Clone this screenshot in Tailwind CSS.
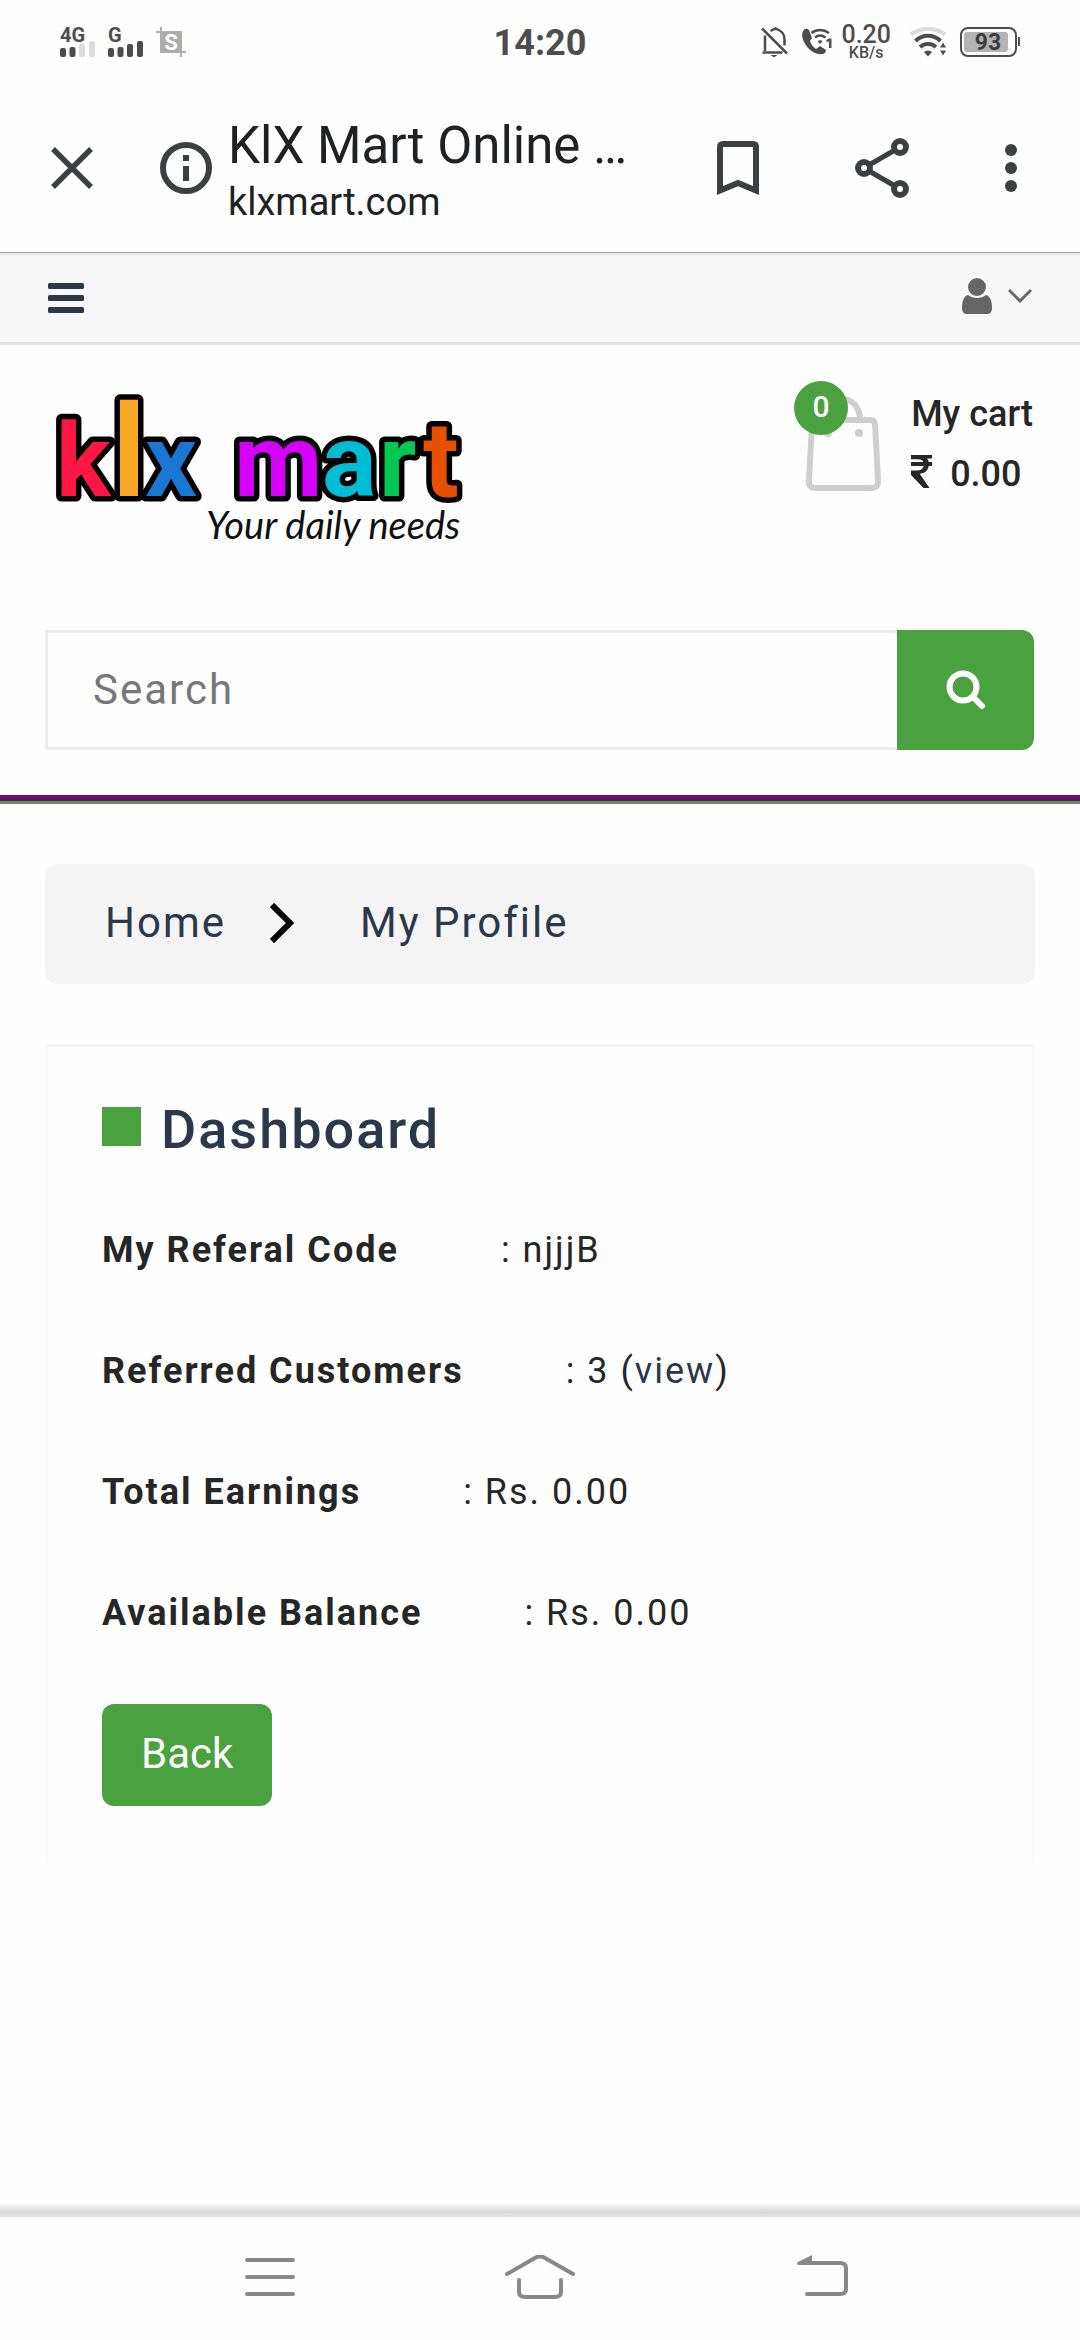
<!DOCTYPE html>
<html lang="en">
<head>
<meta charset="utf-8">
<meta name="viewport" content="width=device-width, initial-scale=1">
<title>KlX Mart Online</title>
<script src="https://cdn.jsdelivr.net/npm/@tailwindcss/browser@4"></script>
</head>
<body class="flex min-h-screen flex-col bg-[#fefefe] font-['Roboto',sans-serif] text-[#262626]">

<!-- Device status bar -->
<div class="grid h-[84px] grid-cols-3 items-center px-[60px] text-[#4d4d4d]">
  <div class="flex items-center gap-3">
    <svg class="h-[30px] w-9 overflow-visible" viewBox="0 0 36 30" fill="#4d4d4d">
      <text x="0" y="15" font-size="20" font-weight="700" font-family="Roboto, sans-serif">4G</text>
      <rect x="0" y="21" width="6" height="9" rx="2"/><rect x="9.500" y="20" width="6" height="10" rx="2"/>
      <rect x="19" y="17" width="6" height="13" rx="2" fill="#dcdcdc"/><rect x="29" y="14" width="6" height="16" rx="2" fill="#dcdcdc"/>
    </svg>
    <svg class="h-[30px] w-9 overflow-visible" viewBox="0 0 36 30" fill="#4d4d4d">
      <text x="0" y="15" font-size="20" font-weight="700" font-family="Roboto, sans-serif">G</text>
      <rect x="0" y="21" width="6" height="9" rx="2"/><rect x="9.500" y="20" width="6" height="10" rx="2"/>
      <rect x="19" y="17" width="6" height="13" rx="2"/><rect x="29" y="14" width="6" height="16" rx="2"/>
    </svg>
    <svg class="h-[30px] w-[30px]" viewBox="0 0 30 30">
      <rect x="4" y="4" width="22" height="22" fill="#adadad"/>
      <path d="M0 5h6M5 0v6M24 25h6M25 24v6" fill="none" stroke="#adadad" stroke-width="2"/>
      <text x="15" y="23" font-size="22" font-weight="700" text-anchor="middle" fill="#fff" font-family="Roboto, sans-serif">S</text>
    </svg>
  </div>
  <div class="pt-px text-center text-4xl/[40px] font-bold">14:20</div>
  <div class="flex items-center justify-end">
    <svg class="mr-3 h-[30px] w-7" viewBox="0 0 28 30" fill="none" stroke="#4d4d4d" stroke-width="2.500">
      <path d="M1 1.500l25 25"/>
      <path d="M4 8.500V24M1.500 25.500h20M9.500 4l5-2.500 4 2c4 2 5 6 5 9v6"/>
      <path d="M9.500 28h7l-3.500 2.500z" fill="#4d4d4d" stroke="none"/>
    </svg>
    <svg class="mr-2 h-[30px] w-8" viewBox="0 0 32 30" fill="#4d4d4d">
      <path d="M4 2C1 4 0 9 3 15c4 8 11 13 19 12 2-1 3-2 3-4l-6-4-4 3c-3-2-5-5-6-8l2-3-3-8C7 1.500 5.500 1.500 4 2z"/>
      <path d="M10.500 6c5-4 12-4 17.500 0M14 10.500c3-2.500 7-2.500 10.500 0" fill="none" stroke="#4d4d4d" stroke-width="2.500"/>
      <path d="M16.500 14c2-1 3.500-1 5 0L19 17z"/>
      <path d="M25.500 13l2.500-1.500h2.500V21H28v-6.500l-2.500.5z"/>
    </svg>
    <div class="mr-[19px] flex flex-col items-center font-medium">
      <span class="text-[25px]/[20px]">0.20</span>
      <span class="text-base/[15px]">KB/s</span>
    </div>
    <svg class="mr-3 h-[30px] w-[38px]" viewBox="0 0 38 30" fill="none" stroke="#4d4d4d" stroke-width="4">
      <path d="M1 7.500c9-7.500 25-7.500 34 0" stroke="#dcdcdc"/>
      <path d="M5.500 14c7-7 18-7 25 0M10 20c5-4 11-4 16 0"/>
      <path d="M14 25c2.500-2 5.500-2 8 0l-4 4.500z" fill="#4d4d4d" stroke="none"/>
      <path d="M30 20.500l3-5 3 5zM30 23.500l3 5 3-5z" fill="#4d4d4d" stroke="none"/>
    </svg>
    <svg class="h-[30px] w-[60px]" viewBox="0 0 60 30">
      <rect x="1" y="1" width="55" height="28" rx="7" fill="none" stroke="#4d4d4d" stroke-width="2"/>
      <rect x="4" y="5" width="44" height="20" rx="3" fill="#b3b3b3"/>
      <rect x="58" y="10" width="2" height="9" fill="#4d4d4d"/>
      <text x="28" y="23" font-size="23" font-weight="700" text-anchor="middle" fill="#3d3d3d" font-family="Roboto, sans-serif">93</text>
    </svg>
  </div>
</div>

<!-- Browser toolbar -->
<div class="flex h-[168px] items-center pr-[57px] pl-[51px]">
  <button type="button" aria-label="Close tab"><svg class="block h-[42px] w-[42px]" viewBox="0 0 42 42" fill="none" stroke="#3c4043" stroke-width="5.500"><path d="M2 2l38 38M40 2L2 40"/></svg></button>
  <button type="button" aria-label="Site information" class="ml-[67px]"><svg class="block h-[52px] w-[52px]" viewBox="0 0 52 52"><circle cx="26" cy="26" r="23" fill="none" stroke="#3c4043" stroke-width="6"/><path d="M23 13h6v6h-6zM23 24h6v15h-6z" fill="#3c4043"/></svg></button>
  <div class="ml-4 min-w-0 flex-1 pt-1 text-[#202124]">
    <div class="truncate text-[51px]/[64px]">KlX Mart Online …</div>
    <div class="truncate text-[38px]/[48px]">klxmart.com</div>
  </div>
  <button type="button" aria-label="Bookmark"><svg class="block h-[54px] w-[42px]" viewBox="0 0 42 54"><path d="M3 49.500V6q0-3 3-3h30q3 0 3 3v43.500l-18-7.500z" fill="none" stroke="#3c4043" stroke-width="6"/></svg></button>
  <button type="button" aria-label="Share" class="ml-24"><svg class="block h-[60px] w-[54px]" viewBox="0 0 54 60" fill="none" stroke="#3c4043" stroke-width="6"><circle cx="45" cy="9" r="6"/><circle cx="9" cy="30" r="6"/><circle cx="45" cy="51" r="6"/><path d="M14 27l26-15M14 33l26 15" stroke-width="5"/></svg></button>
  <button type="button" aria-label="More options" class="ml-[90px]"><svg class="block h-12 w-6" viewBox="0 0 24 48" fill="#3c4043"><circle cx="12" cy="6" r="6"/><circle cx="12" cy="24" r="6"/><circle cx="12" cy="42" r="6"/></svg></button>
</div>

<!-- Shop top bar -->
<nav class="flex h-[93px] items-center justify-between border-t border-b-[3px] border-t-[#a6a6a6] border-b-[#e2e2e2] bg-[#f7f7f7] bg-linear-to-b from-[#e4e4e4] to-[#f7f7f7] to-4% px-12">
  <button type="button" aria-label="Menu"><svg class="block h-[30px] w-9" viewBox="0 0 36 30" fill="#2b3849"><rect width="36" height="6" rx="1.500"/><rect y="12" width="36" height="6" rx="1.500"/><rect y="24" width="36" height="6" rx="1.500"/></svg></button>
  <button type="button" aria-label="Account" class="flex items-center gap-4 pb-1">
    <svg class="h-9 w-[30px]" viewBox="0 0 30 36" fill="#666"><circle cx="15" cy="9" r="9"/><path d="M6 17c5 4 13 4 18 0 4 1 6 6 6 13 0 4-2 6-5 6H5c-3 0-5-2-5-6 0-7 2-12 6-13z"/></svg>
    <svg class="h-[15px] w-6" viewBox="0 0 24 15" fill="none" stroke="#666" stroke-width="3"><path d="M1 2l11 11L23 2"/></svg>
  </button>
</nav>

<header class="border-b-[3px] border-b-[#559a50] bg-[#fefefe]">
  <div class="border-b-[6px] border-b-[#6a0f63] px-[45px] pt-9 pb-[45px]">
    <div class="flex items-start justify-between">
      <a href="#" aria-label="klx mart home" class="ml-[10px]">
        <svg class="block h-[174px] w-[410px] overflow-visible" viewBox="55 381 410 174">
          <g font-family="Roboto, sans-serif" font-weight="700" font-size="102" stroke="#000" stroke-width="11" stroke-linejoin="round" paint-order="stroke">
            <text x="56" y="496" fill="#ff1744">k</text>
            <text x="145" y="496" fill="#1976d2">x</text>
            <text x="112" y="496" font-size="128" fill="#f9a825">l</text>
            <text x="234" y="496" fill="#d500f9">m</text>
            <text x="322" y="496" fill="#00bcd4">a</text>
            <text x="379" y="496" fill="#00c853">r</text>
            <text x="423" y="496" font-size="106" fill="#e65100">t</text>
          </g>
          <text x="206" y="539" font-family="Lato, sans-serif" font-style="italic" font-size="38" fill="#111">Your daily needs</text>
        </svg>
      </a>
      <a href="#" class="mr-0.5 flex items-start">
        <span class="relative block pt-[15px] pl-3">
          <svg class="block h-24 w-[75px]" viewBox="0 0 75 96" fill="none" stroke="#cecece" stroke-width="6"><path d="M9 24h56q3 0 4 4l3 56q1 8-7 8H10q-8 0-7-8L6 28q0-4 3-4zM18 24C18-4 54-4 54 24"/><circle cx="22" cy="37" r="4" fill="#cecece" stroke="none"/><circle cx="53" cy="37" r="4" fill="#cecece" stroke="none"/></svg>
          <span class="absolute top-0 left-0 flex size-[54px] items-center justify-center rounded-full bg-[#4aa140] pb-0.5 text-[30px]/[30px] font-medium text-white">0</span>
        </span>
        <span class="ml-[30px] flex flex-col pt-[3px] text-4xl/[60px] font-medium">
          <span>My cart</span>
          <span class="flex items-center gap-[18px]">
            <svg aria-label="Rupees" class="mb-[6px] h-[33px] w-[21px]" viewBox="0 0 21 33" fill="#262626"><path d="M0 0h21v3.500h-5c1 1 1.500 2.200 1.700 3.500H21v4h-3.300c-.6 4.600-4 7.300-9 7.800L18.500 33h-6L0 20v-4.500h5.500c4 0 6.500-1.500 7.200-4.500H0V7h12.500C11.700 5 9.500 4.300 6 4.300H0z"/></svg>
            0.00
          </span>
        </span>
      </a>
    </div>
    <form class="mt-[75px] flex h-[120px] pr-px" onsubmit="return false">
      <input type="search" aria-label="Search" placeholder="Search" class="min-w-0 flex-1 border-[3px] border-r-0 border-[#ececec] bg-[#fefefe] px-[45px] pb-0.5 text-[42px] tracking-[2px] outline-none placeholder:text-[#777]">
      <button type="submit" aria-label="Search" class="flex w-[137px] items-center justify-center rounded-r-xl bg-[#4aa140]"><svg class="size-10" viewBox="0 0 40 40" fill="none" stroke="#fff" stroke-width="6"><circle cx="17" cy="17" r="13.500"/><path d="M27 27l9 9" stroke-linecap="round"/></svg></button>
    </form>
  </div>
</header>

<main class="px-[45px] pt-[60px]">
  <nav aria-label="Breadcrumb" class="flex h-[120px] items-center rounded-xl bg-[#f4f4f4] pb-0.5 pl-[60px] text-[42px]/[60px] tracking-[2px] text-[#2b3849]">
    <a href="#">Home</a>
    <svg class="ml-11 h-10 w-6" viewBox="0 0 24 40" fill="none" stroke="#000" stroke-width="6"><path d="M2 2l18 18L2 38"/></svg>
    <a href="#" class="ml-[66px]">My Profile</a>
  </nav>

  <section class="mt-[60px] border-x-[3px] border-t-[3px] border-x-[#fafafa] border-t-[#f4f4f4] px-[54px] pt-[51px] pb-[57px]">
    <h1 class="flex items-center gap-5 text-[54px]/[64px] font-medium tracking-[2px] text-[#2b3849]"><span class="mb-2 size-[39px] bg-[#4aa140]"></span>Dashboard</h1>
    <dl class="mt-[58px] flex flex-col gap-[60px] text-4xl/[61px] tracking-[2px]">
      <div class="flex gap-[102px]"><dt class="font-bold">My Referal Code</dt><dd>: njjjB</dd></div>
      <div class="flex gap-[102px]"><dt class="font-bold">Referred Customers</dt><dd>: 3 (<a href="#" class="text-[#2b3849]">view</a>)</dd></div>
      <div class="flex gap-[102px]"><dt class="font-bold">Total Earnings</dt><dd>: Rs. 0.00</dd></div>
      <div class="flex gap-[102px]"><dt class="font-bold">Available Balance</dt><dd>: Rs. 0.00</dd></div>
    </dl>
    <button type="button" class="mt-[60px] block h-[102px] rounded-xl bg-[#4aa140] px-[39px] pb-0.5 text-[42px]/[60px] text-white">Back</button>
  </section>
</main>

<!-- Device navigation -->
<footer class="mt-auto">
  <div class="h-[10px] bg-linear-to-b from-[#fefefe] to-[#d2d2d2]"></div>
  <div class="grid h-[127px] grid-cols-3 items-center justify-items-center border-t-4 border-[#dedede] px-[12.5%] pb-[3px]">
    <button type="button" aria-label="Recent apps"><svg class="block h-11 w-[50px]" viewBox="0 0 50 44" stroke="#888" stroke-width="4" stroke-linecap="round"><path d="M2 5h46M2 22h46M2 39h46"/></svg></button>
    <button type="button" aria-label="Home"><svg class="block h-11 w-[70px]" viewBox="0 0 70 44" fill="none" stroke="#888" stroke-width="4" stroke-linecap="round"><path d="M2 19L30 3q5-3 10 0l28 16M14 25v12q0 5 6 5h30q6 0 6-5V25"/></svg></button>
    <button type="button" aria-label="Back"><svg class="block h-11 w-[76px]" viewBox="0 0 76 44" fill="none" stroke="#888" stroke-width="4" stroke-linecap="round"><path d="M28 8h40q6 0 6 5v21q0 5-6 5H35"/><path d="M40 10H26q-2-1 0-3L40 0z" fill="#888" stroke="none"/></svg></button>
  </div>
</footer>
</body>
</html>
